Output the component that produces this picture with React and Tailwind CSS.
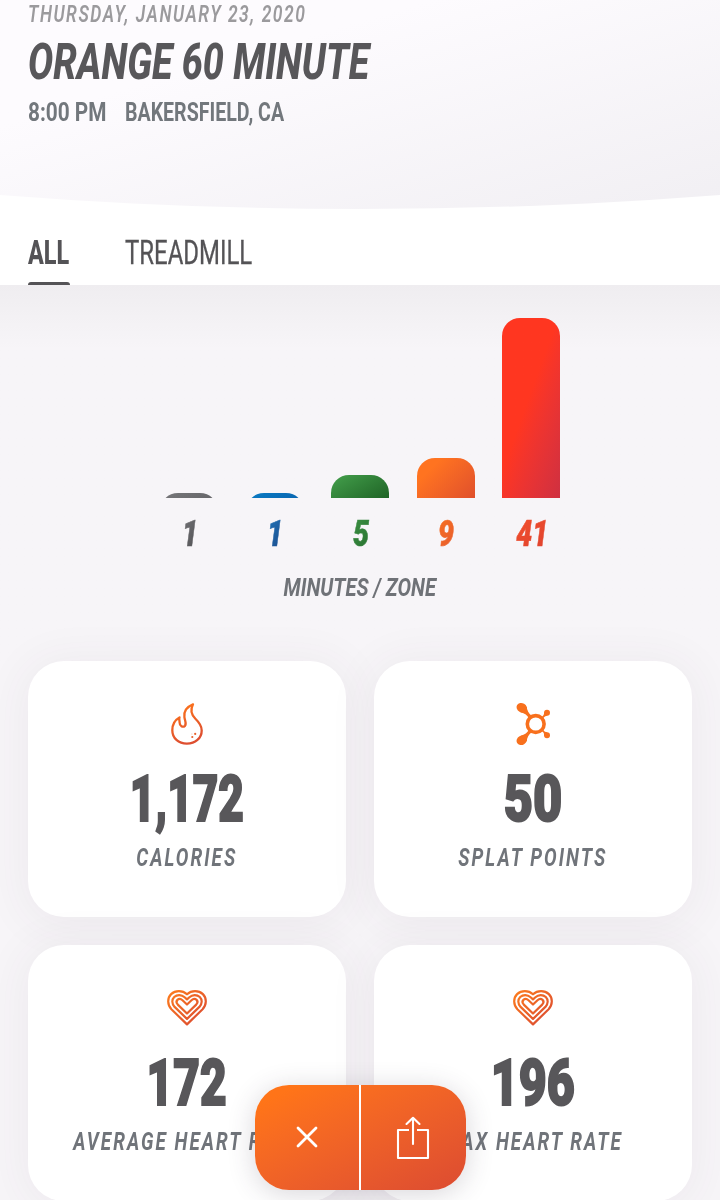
import { clsx } from 'clsx'

const zones = [
	{ minutes: 1, bar: 'bg-linear-150 from-[#77777a] to-[#5f5f62]', text: 'from-[#77777a] to-[#4c4c4f]' },
	{ minutes: 1, bar: 'bg-linear-150 from-[#0a7cc4] to-[#0a5ca8]', text: 'from-[#1f7cc0] to-[#1b4383]' },
	{ minutes: 5, bar: 'bg-linear-150 from-[#44a04c] to-[#1f6426]', text: 'from-[#3f9547] to-[#256d2c]' },
	{ minutes: 9, bar: 'bg-linear-135 from-[#ff7320] from-25% to-[#e04f2b]', text: 'from-[#f97420] to-[#e4572e]' },
	{ minutes: 41, bar: 'bg-linear-110 from-[#ff3620] from-45% to-[#cf3040]', text: 'from-[#f4502a] to-[#dc4130]' },
]

const PX_PER_MINUTE = 4.37

// Squeezes its text horizontally, `className` carries the scale factor
function Condensed({ className, children }) {
	return <span className={clsx('inline-block whitespace-nowrap', className)}>{children}</span>
}

function FlameIcon() {
	return (
		<svg className="w-[32px] h-[42px]" viewBox="0 0 32 42" fill="none">
			<defs>
				<linearGradient id="flame" x1="0" y1="0" x2="0.3" y2="1">
					<stop offset="0" stopColor="#ff7619" />
					<stop offset="1" stopColor="#de4f30" />
				</linearGradient>
			</defs>
			<path
				d="M22 1.3C15.6 4 12.6 8.6 13.4 14.2C14 18.4 15.8 20.6 14 22.8C11.8 24.8 8.6 23.1 8.6 19.4C8.6 17.4 7.8 16.4 8.5 14.4C4.2 16.8 1.3 21.5 1.3 27.2C1.3 35.2 7.5 40.6 15.9 40.6C24.2 40.6 30.7 35.3 30.7 27.4C30.7 22.6 28 19.3 24.4 15.8C20.2 11.6 18.9 7.3 22 1.3Z"
				stroke="url(#flame)"
				strokeWidth="2.3"
				strokeLinejoin="round"
			/>
			<circle cx="21.3" cy="34" r="1.1" fill="#e8602b" />
			<circle cx="24.2" cy="30.9" r="1.1" fill="#e8602b" />
			<circle cx="20.9" cy="31" r="0.5" fill="#f2b08a" />
		</svg>
	)
}

function SplatIcon() {
	return (
		<svg className="w-[34px] h-[44px] -my-[1px]" viewBox="0 0 34 44" fill="#f8701d">
			<circle cx="19.7" cy="22" r="8.4" fill="none" stroke="#f8701d" strokeWidth="3.6" />
			<ellipse cx="5.8" cy="5.8" rx="5.4" ry="4.6" transform="rotate(30 5.8 5.8)" />
			<ellipse cx="5.8" cy="38.2" rx="5.4" ry="4.6" transform="rotate(-30 5.8 38.2)" />
			<path d="M10.6 4.5C11.2 8.5 12.4 11.6 16 14L13.2 17C11.6 13.2 8.6 11.2 4.6 10.2Z" />
			<path d="M10.6 39.5C11.2 35.5 12.4 32.4 16 30L13.2 27C11.6 30.8 8.6 32.8 4.6 33.8Z" />
			<circle cx="31" cy="10.8" r="3" />
			<circle cx="31" cy="33.2" r="3" />
			<path d="M28.1 10.3C28.2 13 27.3 14.2 24.8 15.4L26.6 17.3C27.8 14.9 29.2 13.8 31.5 13.7Z" />
			<path d="M28.1 33.7C28.2 31 27.3 29.8 24.8 28.6L26.6 26.7C27.8 29.1 29.2 30.2 31.5 30.3Z" />
		</svg>
	)
}

function HeartIcon() {
	return (
		<svg className="w-[40px] h-[42px]" viewBox="0 0 40 42" fill="none" stroke="url(#heart)" strokeWidth="2.2" strokeLinejoin="round">
			<defs>
				<linearGradient id="heart" gradientUnits="userSpaceOnUse" x1="4" y1="4" x2="32" y2="34">
					<stop offset="0" stopColor="#fb7a1e" />
					<stop offset="1" stopColor="#de4f30" />
				</linearGradient>
			</defs>
			<path d="M20 37.4L4.4 22.2C0.2 17.8 0.2 11 4.1 7.1C8.3 3.2 15.4 3 20 7.3C24.6 3 31.7 3.2 35.9 7.1C39.8 11 39.8 17.8 35.6 22.2Z" />
			<path d="M20 31.9L7.6 19.9C4.7 16.8 4.6 12.6 7.2 10C10.2 7.2 14.6 7.5 17.6 10.2L20 12.4L22.4 10.2C25.4 7.5 29.8 7.2 32.8 10C35.4 12.6 35.3 16.8 32.4 19.9Z" />
			<path d="M20 26.5L10.8 17.6C9.2 15.9 9.2 14.1 10.4 12.9C12 11.4 14 11.8 15.5 13.2L20 17.5L24.5 13.2C26 11.8 28 11.4 29.6 12.9C30.8 14.1 30.8 15.9 29.2 17.6Z" />
		</svg>
	)
}

const stats = [
	{ value: '1,172', label: 'CALORIES', icon: FlameIcon, scale: 'scale-x-[0.69]' },
	{ value: '50', label: 'SPLAT POINTS', icon: SplatIcon, scale: 'scale-x-[0.79]' },
	{ value: '172', label: 'AVERAGE HEART RATE', icon: HeartIcon, scale: 'scale-x-[0.72]' },
	{ value: '196', label: 'MAX HEART RATE', icon: HeartIcon, scale: 'scale-x-[0.755]' },
]

function StatCard({ value, label, icon: Icon, scale }) {
	return (
		<div className="h-[256px] pt-[42px] flex flex-col items-center rounded-[36px] bg-white shadow-[0_4px_44px_8px_rgba(70,50,75,0.05)]">
			<Icon />
			<Condensed className={clsx('mt-[21.5px] text-[64px] leading-[66px] font-black text-[#58575a] [-webkit-text-stroke:2px_#58575a]', scale)}>
				{value}
			</Condensed>
			<Condensed className="mt-[10.5px] text-[26px] leading-[28px] font-bold italic tracking-[2.8px] text-[#70747a] scale-x-[0.725]">
				{label}
			</Condensed>
		</div>
	)
}

function ZoneChart() {
	return (
		<section className="h-[376px] pt-[32.5px] flex flex-col items-center bg-linear-to-b from-[#efedf0] to-[#f7f5f8] to-[64px]">
			<div className="flex items-end gap-[27.5px] h-[180px]">
				{zones.map((z, i) => (
					<div key={i} className="w-[58px] overflow-hidden" style={{ height: z.minutes * PX_PER_MINUTE + 0.5 }}>
						<div className={clsx('h-full min-h-[20px] rounded-t-[18px]', z.bar)} />
					</div>
				))}
			</div>
			<div className="mt-[17px] flex gap-[27.5px]">
				{zones.map((z, i) => (
					<div key={i} className="w-[58px] pl-[2px] text-center">
						<Condensed
							className={clsx(
								'px-2 -mx-2 text-[36px] leading-[38px] font-black italic scale-x-[0.79] bg-linear-to-br bg-clip-text text-transparent [-webkit-text-stroke:0.6px_transparent]',
								z.text
							)}
						>
							{z.minutes}
						</Condensed>
					</div>
				))}
			</div>
			<Condensed className="mt-[19.5px] text-[26.5px] leading-[30px] font-bold italic text-[#6f7277] scale-x-[0.764]">MINUTES / ZONE</Condensed>
		</section>
	)
}

function ActionBar() {
	return (
		<div className="fixed left-[255px] top-[1085px] w-[210.5px] h-[104.5px] flex rounded-[34px] overflow-hidden bg-linear-to-br from-[#ff7418] from-10% to-[#dc4b31] shadow-[0_4px_28px_rgba(60,50,70,0.2)] text-white">
			<button className="w-[104px] flex items-center justify-center">
				<svg className="w-[22px] h-[22px]" viewBox="0 0 22 22" fill="none" stroke="currentColor" strokeWidth="2.8" strokeLinecap="round">
					<path d="M2 2L20 20M20 2L2 20" />
				</svg>
			</button>
			<div className="w-[2px] bg-white" />
			<button className="flex-1 flex items-center justify-center">
				<svg className="w-[34px] h-[44px] mt-[1px]" viewBox="0 0 34 44" fill="none" stroke="currentColor" strokeWidth="2.1" strokeLinejoin="round">
					<path d="M13 14H2V42H32V14H21" />
					<path d="M17 28V2M10.5 8L17 1.8L23.5 8" strokeLinecap="round" />
				</svg>
			</button>
		</div>
	)
}

export default function App() {
	return (
		<div className="w-[720px] h-[1200px] overflow-hidden bg-[#f7f5f8] font-[Roboto,sans-serif]">
			<div className="bg-white">
				<header className="h-[209px] pl-[28px] flex flex-col items-start bg-linear-to-br from-[#fdfbfe] from-30% to-[#f1eff3] [clip-path:circle(4630px_at_50%_-4421px)]">
					<Condensed className="mt-[1px] text-[23px] leading-[28px] font-semibold italic tracking-[2px] text-[#9b9a9d] origin-left scale-x-[0.76]">
						THURSDAY, JANUARY 23, 2020
					</Condensed>
					<h1 className="mt-[5px] text-[49px] leading-[58px] font-extrabold italic text-[#58575a]">
						<Condensed className="origin-left scale-x-[0.768]">ORANGE 60 MINUTE</Condensed>
					</h1>
					<div className="mt-[5px] flex text-[26px] leading-[30px] font-bold text-[#72777c]">
						<div className="w-[97px]">
							<Condensed className="origin-left scale-x-[0.8]">8:00 PM</Condensed>
						</div>
						<Condensed className="origin-left scale-x-[0.753]">BAKERSFIELD, CA</Condensed>
					</div>
				</header>
				<nav className="h-[76px] pl-[28px] flex text-[32.5px] leading-[38px] text-[#545356]">
					<div className="w-[97px] pt-[25px] flex flex-col items-start justify-between">
						<Condensed className="origin-left scale-x-[0.72] font-extrabold">ALL</Condensed>
						<div className="w-[42px] h-[3.5px] rounded-t-[3px] bg-[#545356]" />
					</div>
					<div className="pt-[25px]">
						<Condensed className="origin-left scale-x-[0.737] [-webkit-text-stroke:0.3px_#545356]">TREADMILL</Condensed>
					</div>
				</nav>
			</div>
			<ZoneChart />
			<main className="px-[28px] grid grid-cols-2 gap-[28px]">
				{stats.map((s) => (
					<StatCard key={s.label} {...s} />
				))}
			</main>
			<ActionBar />
		</div>
	)
}
